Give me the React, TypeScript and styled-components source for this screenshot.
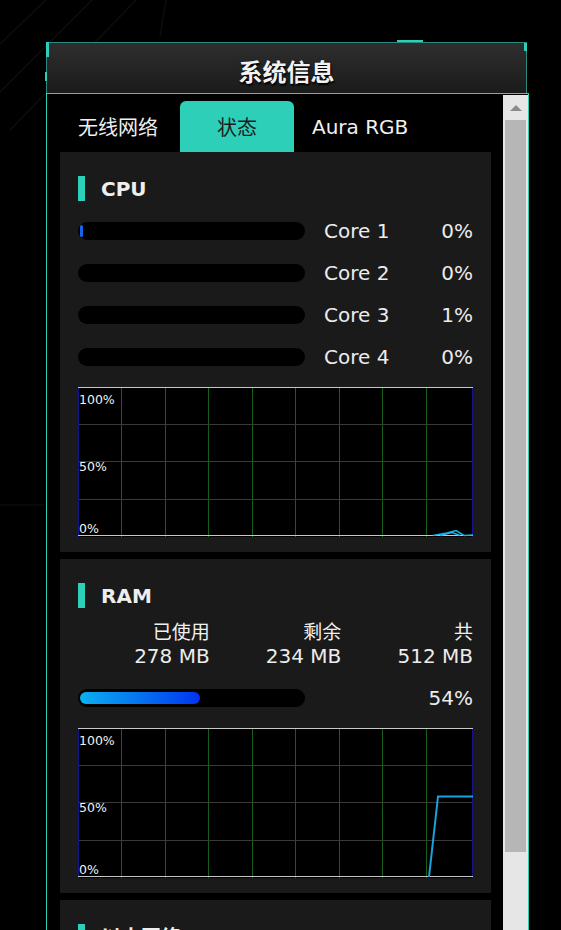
import React from "react";
import styled, { createGlobalStyle } from "styled-components";

const TEAL = "#2dcfb9";
const FONT = `"DejaVu Sans", Verdana, "Noto Sans CJK SC", sans-serif`;

const Global = createGlobalStyle`
  html, body { margin: 0; padding: 0; background: #000; overflow: hidden; }
  body { font-family: ${FONT}; color: #ececec; }
`;

const Page = styled.div`
  position: relative;
  box-sizing: border-box;
  height: 930px;
  padding: 42px 0 0 46px;
  overflow: hidden;
`;

const Backdrop = styled.svg`
  position: absolute;
  left: 0;
  top: 0;
  pointer-events: none;
`;

const Window = styled.div`
  position: relative;
  width: 483px;
`;

const Header = styled.header`
  position: relative;
  box-sizing: border-box;
  width: 481px;
  height: 51px;
  border: 1px solid #2a8a7e;
  border-bottom: none;
  background: linear-gradient(#2e2e2e, #1b1b1b);
  display: flex;
  align-items: center;
  justify-content: center;
  padding-top: 4px;
`;

const Title = styled.h1`
  margin: 0;
  font: bold 24px ${FONT};
  color: #f2f2f2;
  text-shadow: 1px 2px 2px #000, 0 0 1px #000;
`;

const Accent = styled.span<{ $l?: number; $r?: number; $t: number; $w: number; $h: number }>`
  position: absolute;
  ${(p) => (p.$l !== undefined ? `left: ${p.$l}px;` : `right: ${p.$r}px;`)}
  top: ${(p) => p.$t}px;
  width: ${(p) => p.$w}px;
  height: ${(p) => p.$h}px;
  background: ${TEAL};
`;

const Frame = styled.div`
  box-sizing: border-box;
  width: 483px;
  height: 840px;
  border: 1px solid ${TEAL};
  display: flex;
  overflow: hidden;
  background: #000;
`;

const ScrollArea = styled.div`
  flex: 1;
  box-sizing: border-box;
  padding: 7px 12px 0 13px;
  overflow: hidden;
`;

const Scrollbar = styled.div`
  width: 25px;
  margin-top: 1px;
  background: #e6e6e6;
  display: flex;
  flex-direction: column;
`;

const ScrollUp = styled.div`
  height: 25px;
  display: flex;
  align-items: center;
  justify-content: center;
  &::before {
    content: "";
    border-left: 6px solid transparent;
    border-right: 6px solid transparent;
    border-bottom: 6px solid #8c8c8c;
  }
`;

const Thumb = styled.div`
  margin: 0 2px;
  height: 732px;
  background: #b6b6b6;
`;

const Tabs = styled.nav`
  display: flex;
  height: 51px;
`;

const Tab = styled.div<{ $w?: number; $active?: boolean }>`
  box-sizing: border-box;
  ${(p) => (p.$w ? `width: ${p.$w}px;` : "")}
  display: flex;
  align-items: center;
  justify-content: ${(p) => (p.$active ? "center" : "flex-start")};
  padding: 0 ${(p) => (p.$active ? 0 : 18)}px;
  font-size: 20px;
  color: ${(p) => (p.$active ? "#1c1c1c" : "#f0f0f0")};
  background: ${(p) => (p.$active ? TEAL : "transparent")};
  border-radius: 6px 6px 0 0;
`;

const Panel = styled.section`
  background: #1a1a1a;
  padding: 24px 18px 15px 18px;
  margin-bottom: 7px;
`;

const SectionHead = styled.div`
  display: flex;
  align-items: center;
  gap: 16px;
  height: 25px;
`;

const HeadBar = styled.span`
  width: 7px;
  height: 25px;
  background: ${TEAL};
`;

const HeadTitle = styled.h2`
  margin: 0;
  font: bold 20px ${FONT};
  color: #eeeeee;
`;

const MeterList = styled.div`
  margin-top: 9px;
`;

const MeterRow = styled.div`
  display: grid;
  grid-template-columns: 227px 1fr auto;
  column-gap: 19px;
  align-items: center;
  height: 42px;
  font-size: 20px;
  color: #ececec;
`;

const Track = styled.div`
  box-sizing: border-box;
  height: 18px;
  padding: 3px 2px;
  background: #000;
  border-radius: 9px;
  display: flex;
`;

const Fill = styled.div<{ $gradient?: boolean }>`
  height: 12px;
  border-radius: 6px;
  background: ${(p) => (p.$gradient ? "linear-gradient(90deg, #0ab0f2, #0034f0)" : "#1565e8")};
`;

const Value = styled.span`
  text-align: right;
`;

const ChartBox = styled.div`
  margin-top: 9px;
  height: 150px;
`;

const Stats = styled.div`
  margin-top: 12px;
  display: grid;
  grid-template-columns: repeat(3, 1fr);
  text-align: right;
`;

const StatLabel = styled.div`
  font-size: 19px;
  line-height: 24px;
  color: #f0f0f0;
`;

const StatValue = styled.div`
  font-size: 20px;
  line-height: 24px;
  color: #ececec;
`;

const W = 395;
const H = 150;

function Chart({ children }: { children?: React.ReactNode }) {
  const vx = Array.from({ length: 8 }, (_, i) => Math.round(43.46 * (i + 1)) + 0.5);
  const hy = [37.5, 74.5, 112.5];
  return (
    <svg width={W} height={H} viewBox={`0 0 ${W} ${H}`}>
      <rect x={0} y={0} width={W} height={H} fill="#000" />
      <g shapeRendering="crispEdges">
        {vx.map((x) => (
          <line key={x} x1={x} x2={x} y1={0} y2={H} stroke="#155f17" strokeWidth={1} />
        ))}
        {hy.map((y) => (
          <line key={y} x1={0} x2={W} y1={y} y2={y} stroke="#3a3a3a" strokeWidth={1} />
        ))}
        <line x1={0.5} x2={0.5} y1={0} y2={H} stroke="#14148a" />
        <line x1={W - 0.5} x2={W - 0.5} y1={0} y2={H} stroke="#14148a" />
        <line x1={0} x2={W} y1={0.5} y2={0.5} stroke="#c8c8c8" />
        <line x1={0} x2={W} y1={H - 1.5} y2={H - 1.5} stroke="#c8c8c8" />
      </g>
      <g fill="#f2f2f2" fontSize="12.5" fontFamily={FONT}>
        <text x={1} y={17}>100%</text>
        <text x={1} y={84}>50%</text>
        <text x={1} y={146}>0%</text>
      </g>
      {children}
    </svg>
  );
}

const cores = [
  { name: "Core 1", pct: "0%", fill: 3 },
  { name: "Core 2", pct: "0%", fill: 0 },
  { name: "Core 3", pct: "1%", fill: 0 },
  { name: "Core 4", pct: "0%", fill: 0 },
];

const ram = [
  { label: "已使用", value: "278 MB" },
  { label: "剩余", value: "234 MB" },
  { label: "共", value: "512 MB" },
];

export default function App() {
  return (
    <>
      <Global />
      <Page>
        <Backdrop width={561} height={930}>
          <g stroke="#0d0d0d" strokeWidth={1.5} fill="none">
            <line x1={0} y1={44} x2={50} y2={-4} />
            <line x1={0} y1={92} x2={96} y2={-4} />
            <line x1={10} y1={130} x2={140} y2={-4} />
            <line x1={166} y1={0} x2={160} y2={36} />
            <line x1={0} y1={505} x2={44} y2={505} />
          </g>
        </Backdrop>
        <Window>
          <Header>
            <Accent $l={-1} $t={-1} $w={3} $h={15} />
            <Accent $l={-2} $t={29} $w={2} $h={9} />
            <Accent $r={-1} $t={0} $w={3} $h={8} />
            <Accent $l={350} $t={-3} $w={26} $h={2} />
            <Title>系统信息</Title>
          </Header>
          <Frame>
            <ScrollArea>
              <Tabs>
                <Tab $w={120}>无线网络</Tab>
                <Tab $w={114} $active>状态</Tab>
                <Tab>Aura RGB</Tab>
              </Tabs>

              <Panel>
                <SectionHead>
                  <HeadBar />
                  <HeadTitle>CPU</HeadTitle>
                </SectionHead>
                <MeterList>
                  {cores.map((c) => (
                    <MeterRow key={c.name}>
                      <Track>
                        <Fill style={{ width: c.fill }} />
                      </Track>
                      <span>{c.name}</span>
                      <Value>{c.pct}</Value>
                    </MeterRow>
                  ))}
                </MeterList>
                <ChartBox>
                  <Chart>
                    <polyline
                      points="355,148.5 369,146 378,143.5 386,148.5 395,148"
                      fill="none"
                      stroke="#18b4ec"
                      strokeWidth={1.5}
                    />
                    <polyline
                      points="362,148.5 374,145.5 382,148.5"
                      fill="none"
                      stroke="#18b4ec"
                      strokeWidth={1.5}
                    />
                  </Chart>
                </ChartBox>
              </Panel>

              <Panel>
                <SectionHead>
                  <HeadBar />
                  <HeadTitle>RAM</HeadTitle>
                </SectionHead>
                <Stats>
                  {ram.map((r) => (
                    <div key={r.label}>
                      <StatLabel>{r.label}</StatLabel>
                      <StatValue>{r.value}</StatValue>
                    </div>
                  ))}
                </Stats>
                <MeterList>
                  <MeterRow>
                    <Track>
                      <Fill $gradient style={{ width: "54%" }} />
                    </Track>
                    <span />
                    <Value>54%</Value>
                  </MeterRow>
                </MeterList>
                <ChartBox>
                  <Chart>
                    <polyline
                      points="351,149 360,68.5 395,68.5"
                      fill="none"
                      stroke="#1aa2dc"
                      strokeWidth={2}
                    />
                  </Chart>
                </ChartBox>
              </Panel>

              <Panel>
                <SectionHead>
                  <HeadBar />
                  <HeadTitle>以太网络</HeadTitle>
                </SectionHead>
              </Panel>
            </ScrollArea>
            <Scrollbar>
              <ScrollUp />
              <Thumb />
            </Scrollbar>
          </Frame>
        </Window>
      </Page>
    </>
  );
}
